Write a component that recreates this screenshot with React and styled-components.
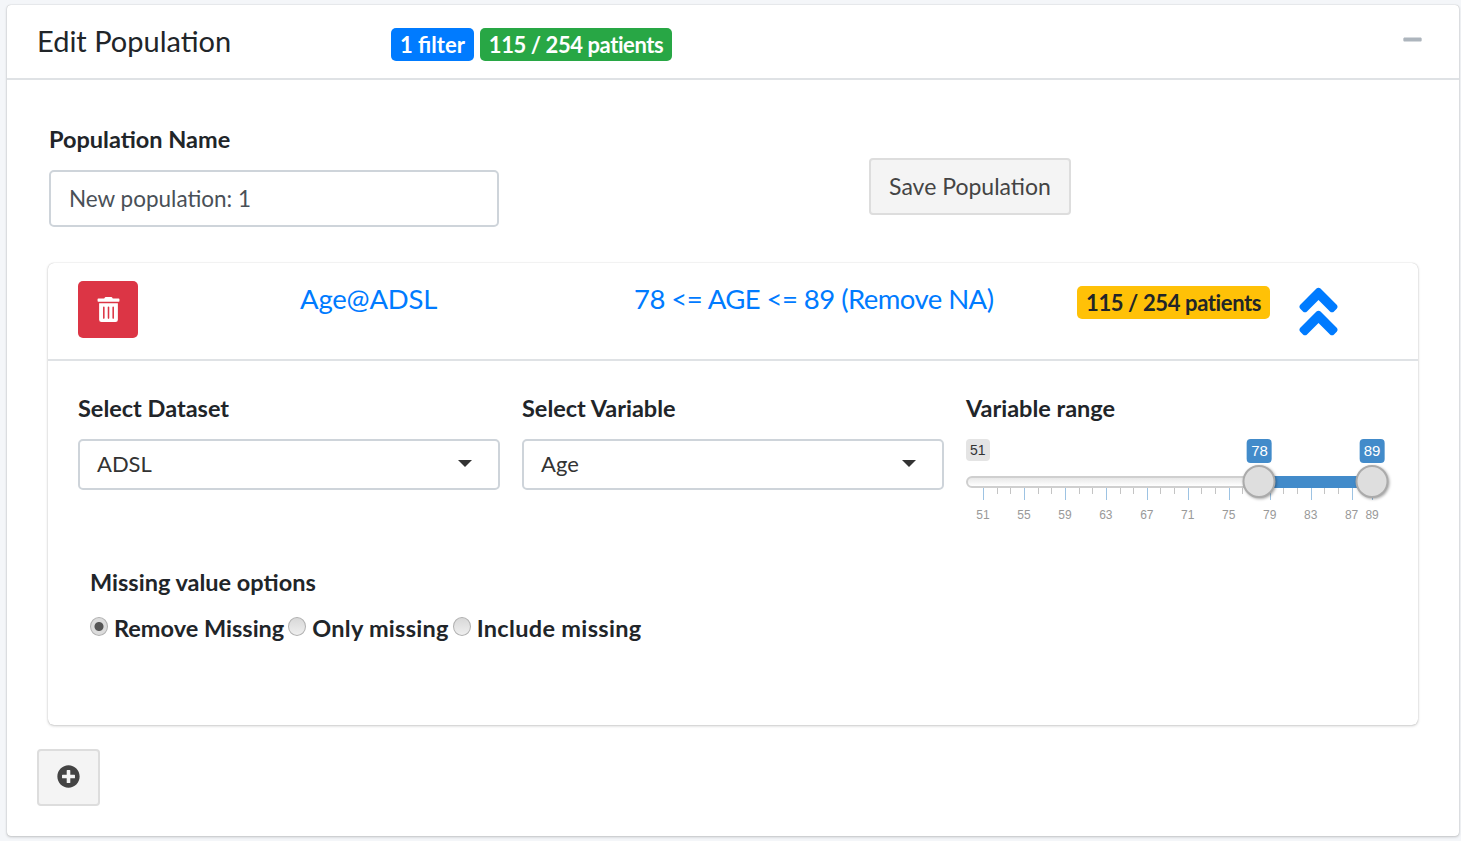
import React from "react";
import styled, { createGlobalStyle } from "styled-components";
import { FaMinus, FaTrashAlt, FaAngleDoubleUp, FaPlusCircle } from "react-icons/fa";

const tickValues = [51, 55, 59, 63, 67, 71, 75, 79, 83, 87];
const unit = 10.24;

function RangeSlider() {
  const minorTicks = [];
  tickValues.forEach((value) => {
    if (value === 87) return;
    minorTicks.push(value + 4 / 3, value + 8 / 3);
  });
  minorTicks.push(88);

  const place = (value) => 17 + (value - 51) * unit;

  return (
    <Slider>
      <MinBubble>51</MinBubble>
      <ValueBubble style={{ left: place(78) }}>78</ValueBubble>
      <ValueBubble style={{ left: place(89) }}>89</ValueBubble>
      <Track />
      <TrackFill style={{ left: place(78), width: place(89) - place(78) }} />
      {minorTicks.map((value) => (
        <MinorTick key={value} style={{ left: place(value) }} />
      ))}
      {[...tickValues, 89].map((value) => (
        <React.Fragment key={value}>
          <MajorTick style={{ left: place(value) }} />
          <TickLabel style={{ left: place(value) }}>{value}</TickLabel>
        </React.Fragment>
      ))}
      <Handle style={{ left: place(78) - 0.5 }} />
      <Handle style={{ left: place(89) - 0.5 }} />
    </Slider>
  );
}

function App() {
  return (
    <>
      <GlobalStyle />
      <Page>
        <Card>
          <CardHeader>
            <Title>Edit Population</Title>
            <Badges>
              <Badge $bg="#007bff">1 filter</Badge>
              <Badge $bg="#28a745" $spacing="-0.42px">
                115 / 254 patients
              </Badge>
            </Badges>
            <CollapseIcon>
              <FaMinus size={21} />
            </CollapseIcon>
          </CardHeader>
          <CardBody>
            <NameRow>
              <NameField>
                <FieldLabel>Population Name</FieldLabel>
                <TextInput defaultValue="New population: 1" />
              </NameField>
              <SaveButton>Save Population</SaveButton>
            </NameRow>

            <FilterCard>
              <FilterHeader>
                <DeleteButton>
                  <FaTrashAlt size={25} />
                </DeleteButton>
                <FilterLink>Age@ADSL</FilterLink>
                <FilterLink $spacing="-0.55px">78 &lt;= AGE &lt;= 89 (Remove NA)</FilterLink>
                <WarningBadge>115 / 254 patients</WarningBadge>
                <ChevronIcon>
                  <FaAngleDoubleUp size={61} />
                </ChevronIcon>
              </FilterHeader>
              <FilterBody>
                <FieldGrid>
                  <div>
                    <FieldLabel>Select Dataset</FieldLabel>
                    <SelectBox>ADSL</SelectBox>
                  </div>
                  <div>
                    <FieldLabel>Select Variable</FieldLabel>
                    <SelectBox>Age</SelectBox>
                  </div>
                  <div>
                    <FieldLabel>Variable range</FieldLabel>
                    <RangeSlider />
                  </div>
                </FieldGrid>
                <MissingBlock>
                  <FieldLabel>Missing value options</FieldLabel>
                  <RadioRow>
                    <RadioOption>
                      <Radio $checked />
                      Remove Missing
                    </RadioOption>
                    <RadioOption $spacing="0.25px">
                      <Radio />
                      Only missing
                    </RadioOption>
                    <RadioOption $spacing="0.33px">
                      <Radio />
                      Include missing
                    </RadioOption>
                  </RadioRow>
                </MissingBlock>
              </FilterBody>
            </FilterCard>

            <AddButton>
              <FaPlusCircle size={23} />
            </AddButton>
          </CardBody>
        </Card>
      </Page>
    </>
  );
}

const GlobalStyle = createGlobalStyle`
  html, body {
    margin: 0;
    background: #f4f6f9;
  }
  * {
    box-sizing: border-box;
  }
`;

const Page = styled.div`
  padding: 5px 2px 5px 7px;
  font-family: Lato, "Noto Sans", sans-serif;
  color: #212529;
`;

const Card = styled.div`
  height: 831px;
  background: #fff;
  border-radius: 4px;
  box-shadow: 0 0 1px rgba(0, 0, 0, 0.3), 0 1px 3px rgba(0, 0, 0, 0.2);
`;

const CardHeader = styled.div`
  height: 75px;
  display: flex;
  align-items: center;
  padding: 0 36px 0 30px;
  border-bottom: 2px solid #dfe2e5;
`;

const Title = styled.div`
  width: 354px;
  font-size: 29px;
  font-weight: 400;
  margin-top: -2px;
`;

const Badges = styled.div`
  display: flex;
  gap: 6px;
  margin-top: 5px;
`;

const Badge = styled.span`
  height: 33px;
  padding: 0 9px;
  display: flex;
  align-items: center;
  border-radius: 5px;
  background: ${(p) => p.$bg};
  color: #fff;
  font-size: 22px;
  font-weight: 700;
  letter-spacing: ${(p) => p.$spacing || "0"};
`;

const CollapseIcon = styled.div`
  margin-left: auto;
  color: #adb5bd;
  display: flex;
  margin-top: -4px;
`;

const CardBody = styled.div`
  padding: 45px 40px 0 30px;
`;

const NameRow = styled.div`
  display: flex;
  align-items: flex-start;
  padding-left: 12px;
  height: 138px;
`;

const NameField = styled.div`
  width: 450px;
  margin-right: 370px;
`;

const FieldLabel = styled.div`
  font-size: 23.5px;
  font-weight: 700;
  line-height: 28px;
  margin-bottom: 17px;
`;

const TextInput = styled.input`
  display: block;
  width: 100%;
  height: 57px;
  padding: 0 18px;
  border: 2px solid #ced4da;
  border-radius: 5px;
  font-family: inherit;
  font-size: 22.5px;
  color: #495057;
  outline: none;
`;

const SaveButton = styled.button`
  width: 202px;
  height: 57px;
  margin-top: 33px;
  padding: 0 0 2px;
  border: 2px solid #ddd;
  border-radius: 4px;
  background: #f4f4f4;
  font-family: inherit;
  font-size: 23px;
  color: #444;
`;

const FilterCard = styled.div`
  margin-left: 11px;
  width: 1370px;
  height: 462px;
  border-radius: 6px;
  background: #fff;
  box-shadow: 0 0 1px rgba(0, 0, 0, 0.25), 0 1px 3px rgba(0, 0, 0, 0.2);
`;

const FilterHeader = styled.div`
  height: 98px;
  display: grid;
  grid-template-columns: 222px 334px 443px 222px 60px;
  padding: 18px 0 0 30px;
  border-bottom: 2px solid #dfe2e5;
  align-items: start;
`;

const DeleteButton = styled.button`
  width: 60px;
  height: 57px;
  border: none;
  border-radius: 5px;
  background: #dc3545;
  color: #fff;
  display: flex;
  align-items: center;
  justify-content: center;
`;

const FilterLink = styled.div`
  font-size: 27.5px;
  font-weight: 400;
  line-height: 36px;
  color: #007bff;
  letter-spacing: ${(p) => p.$spacing || "-0.2px"};
`;

const WarningBadge = styled.span`
  justify-self: start;
  height: 33px;
  margin-top: 5px;
  padding: 0 9px;
  display: flex;
  align-items: center;
  border-radius: 5px;
  background: #ffc107;
  color: #212529;
  font-size: 22px;
  font-weight: 700;
  letter-spacing: -0.38px;
`;

const ChevronIcon = styled.div`
  color: #007bff;
  display: flex;
  margin: 0 0 0 -11px;
`;

const FilterBody = styled.div`
  padding: 33px 0 0 30px;
`;

const FieldGrid = styled.div`
  display: grid;
  grid-template-columns: repeat(3, 422px);
  column-gap: 22px;
`;

const SelectBox = styled.div`
  position: relative;
  height: 51px;
  padding: 0 17px 3px;
  display: flex;
  align-items: center;
  border: 2px solid #ced4da;
  border-radius: 5px;
  font-size: 22px;
  color: #333;

  &::after {
    content: "";
    position: absolute;
    right: 26px;
    top: 19px;
    border-style: solid;
    border-width: 7px 7px 0;
    border-color: #333 transparent transparent;
  }
`;

const Slider = styled.div`
  position: relative;
  height: 82px;
  width: 422px;
`;

const MinBubble = styled.span`
  position: absolute;
  left: 0;
  top: 0;
  padding: 1px 4px;
  background: #e4e4e4;
  border-radius: 4px;
  font-family: "Liberation Sans", Arial, sans-serif;
  font-size: 14px;
  line-height: 20px;
  color: #333;
`;

const ValueBubble = styled.span`
  position: absolute;
  top: 0;
  transform: translateX(-50%);
  padding: 2px 4px;
  background: #428bca;
  border-radius: 4px;
  font-family: "Liberation Sans", Arial, sans-serif;
  font-size: 15px;
  line-height: 20px;
  color: #fff;
`;

const Track = styled.div`
  position: absolute;
  left: 0;
  right: 0;
  top: 37px;
  height: 12px;
  border: 2px solid #cfcfcf;
  border-radius: 6px;
  background: linear-gradient(#e8e8e8, #fff);
`;

const TrackFill = styled.div`
  position: absolute;
  top: 37px;
  height: 12px;
  background: #428bca;
`;

const MinorTick = styled.div`
  position: absolute;
  top: 49px;
  width: 1px;
  height: 6px;
  background: #c4c4c4;
`;

const MajorTick = styled.div`
  position: absolute;
  top: 49px;
  width: 1px;
  height: 12px;
  background: #9dc3e3;
`;

const TickLabel = styled.span`
  position: absolute;
  top: 69px;
  transform: translateX(-50%);
  font-family: "Liberation Sans", Arial, sans-serif;
  font-size: 12px;
  line-height: 14px;
  color: #999;
`;

const Handle = styled.div`
  position: absolute;
  top: 26px;
  width: 33px;
  height: 33px;
  transform: translateX(-50%);
  border: 2px solid #ababab;
  border-radius: 50%;
  background: #dedede;
  box-shadow: 1px 1px 3px rgba(0, 0, 0, 0.35);
`;

const MissingBlock = styled.div`
  padding: 47px 0 0 12px;
`;

const RadioRow = styled.div`
  display: flex;
  gap: 4px;
`;

const RadioOption = styled.label`
  display: flex;
  align-items: center;
  gap: 6px;
  font-size: 23.5px;
  font-weight: 700;
  line-height: 30px;
  letter-spacing: ${(p) => p.$spacing || "0"};
`;

const Radio = styled.span`
  width: 18px;
  height: 19px;
  margin-top: -4px;
  border: 1px solid #b0b0b0;
  border-radius: 50%;
  background: ${(p) =>
    p.$checked
      ? "radial-gradient(circle, #555 0 4px, #dcdcdc 5px)"
      : "linear-gradient(#d8d8d8, #efefef)"};
`;

const AddButton = styled.button`
  width: 63px;
  height: 57px;
  margin-top: 24px;
  padding: 0 0 2px;
  border: 2px solid #ddd;
  border-radius: 4px;
  background: #f4f4f4;
  color: #444;
  display: flex;
  align-items: center;
  justify-content: center;
`;

export default App;
